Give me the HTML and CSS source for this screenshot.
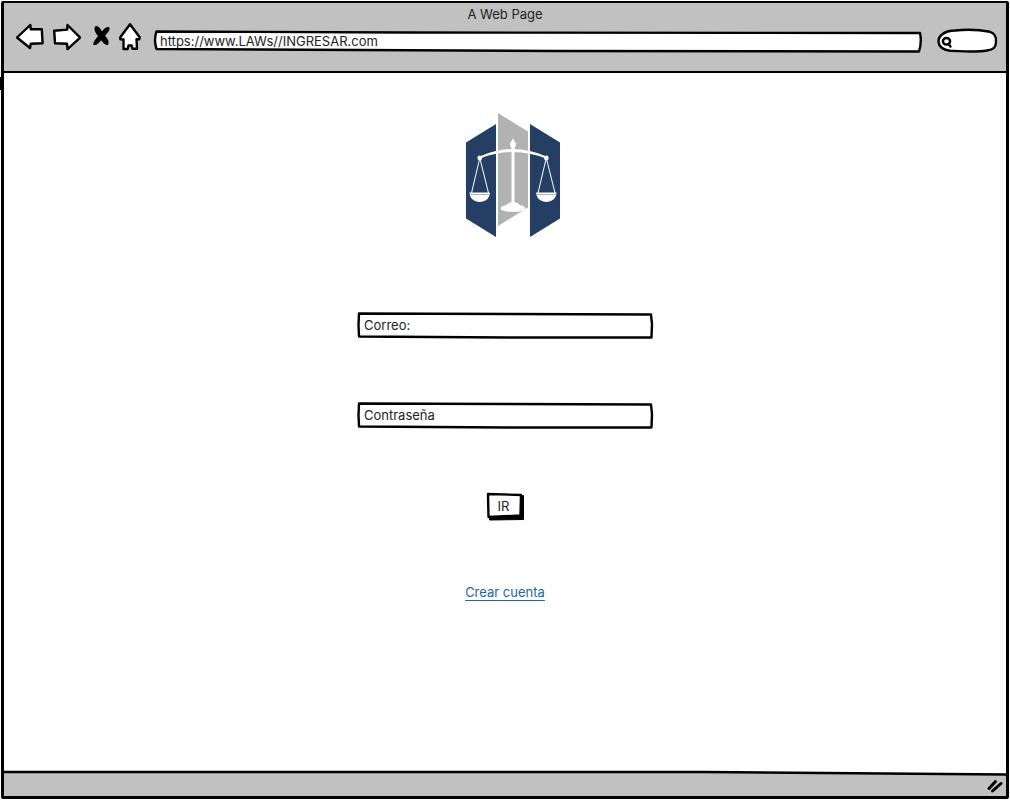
FILE: index.html
```html
<!DOCTYPE html>
<html lang="es">
<head>
<meta charset="utf-8">
<meta name="viewport" content="width=device-width, initial-scale=1">
<title>A Web Page</title>
<link rel="stylesheet" href="styles.css">
</head>
<body>
<div class="window">
  <header class="chrome">
    <div class="title">A Web Page</div>
    <div class="toolbar">
      <button class="tool" type="button" aria-label="Back">
        <svg class="ink" width="28" height="28" viewBox="16 23 28 28"><path d="M17 37.5 30.3 25 30.8 29.3 41.8 29.3 42.6 43.3 30.8 43.8 30 48Z"/></svg>
      </button>
      <button class="tool" type="button" aria-label="Forward">
        <svg class="ink" width="28" height="28" viewBox="53 23 28 28"><path d="M54.2 30.7 67.2 29.6 67.5 25 80.2 37.6 67.5 49.2 67 43.8 55 43.3Z"/></svg>
      </button>
      <button class="tool" type="button" aria-label="Stop">
        <svg width="20" height="28" viewBox="90 23 20 28"><path d="M95.5 26C99 26 100.500 28.500 102 31.500 103.500 29 106 26.300 109 27 111 30 107.500 33 105 35.800 108 39 109.500 42 108 45 105 45.500 103 42.500 101 40.300 99 43 96.500 45.700 93.500 45 92.500 42 96 39 98 36.300 95.500 33 93 28.500 95.500 26Z"/></svg>
      </button>
      <button class="tool" type="button" aria-label="Home">
        <svg class="ink" width="22" height="28" viewBox="119 23 22 28"><path d="M130 24.300 139.700 37.300 139.300 39.200 136.500 39.200 137 48.800 132.500 48.800 131.700 45.500 128.500 45.500 127.700 49 123.500 49 123.500 39.500 120.300 39.200 120.300 37.300Z"/></svg>
      </button>
      <div class="sketch url">
        <svg class="frame" viewBox="0 0 768 22" preserveAspectRatio="none" aria-hidden="true"><path d="M2.500 1.500 250 2.500 766 3Q768 12 765 21.500L400 21 2.500 19Q-.5 10 2.500 1.500Z"/></svg>
        <input class="entry" type="text" aria-label="Address" value="https://www.LAWs//INGRESAR.com">
      </div>
      <div class="sketch search">
        <svg class="frame" viewBox="937 28 61 26" aria-hidden="true"><path d="M938.500 42C938 35 946 30.500 955 30.500 968 29 981 30 990 31.800 994 33 996.500 37 996 42 996 47 994 49.500 987 50.500 974 52.500 961 51 950 50.800 942 49.500 939 46 938.500 42Z"/><ellipse cx="946.500" cy="41.300" rx="3.600" ry="3.300"/><path d="M948.500 44 950.500 46.500"/></svg>
        <input class="entry entry-search" type="search" aria-label="Search">
      </div>
    </div>
  </header>
  <main class="page">
    <svg class="logo" width="112" height="126" viewBox="449 112 112 126" role="img" aria-label="LAWs">
      <path fill="#243f63" d="M466 142.500 496 124V237L466 218.500ZM530 124 560 142.500V218.500L530 237Z"/>
      <path fill="#b2b2b2" d="M498 113 528 131.500V207.500L498 226Z"/>
      <g fill="#fff">
        <path d="M479.500 156.500Q513 141.500 546.500 156.500L546 158.500Q513 145.500 480 158.500Z"/>
        <circle cx="479.800" cy="158" r="2.400"/><circle cx="546.300" cy="158" r="2.400"/>
        <path d="M513 138C514 141 516 142 516 144.500 516 146 515 147 514.500 148H511.500C511 147 510 146 510 144.500 510 142 512 141 513 138Z"/>
        <path d="M511.500 147H514.500V203H511.500Z"/>
        <path d="M500.500 208.500C501 205.500 506 206 508 203.500 511 201.500 515 201.500 518 203.500 520 206 525 205.500 525.500 208.500 525 213 501 213 500.500 208.500Z"/>
        <path d="M469.500 192.500H489.800C490 205 469.500 205 469.500 192.500ZM536.200 192.500H556.500C556.500 205 536.200 205 536.200 192.500Z"/>
      </g>
      <path fill="none" stroke="#fff" d="M471.500 193 479.800 158 488.500 193M538 193 546.300 158 555 193"/>
      <path stroke="#8c9bb8" stroke-width=".8" d="M470 194.600H489.500M536.500 194.600H556"/>
    </svg>
    <form class="login">
      <div class="sketch field">
        <svg class="frame" viewBox="0 0 295 27" preserveAspectRatio="none" aria-hidden="true"><path d="M2 1.500 150 2 293 2.500 294 12 293.500 25.500 150 25.500 2 24.500 1.500 13Z"/></svg>
        <input class="entry" type="email" aria-label="Correo" placeholder="Correo:">
      </div>
      <div class="sketch field">
        <svg class="frame" viewBox="0 0 295 27" preserveAspectRatio="none" aria-hidden="true"><path d="M2 1.500 150 2 293 2.500 294 12 293.500 25.500 150 25.500 2 24.500 1.500 13Z"/></svg>
        <input class="entry" type="password" aria-label="Contraseña" placeholder="Contraseña">
      </div>
      <button class="sketch go" type="button">
        <svg class="frame" viewBox="486 492 38 28" aria-hidden="true"><path class="shade" d="M490 496 523.500 495.500 523.500 519.500 490 520Z"/><path d="M488 494 521 495 520.500 515.500 488.500 517Z"/></svg>
        <span class="go-text">IR</span>
      </button>
      <a class="signup" href="#">Crear cuenta</a>
    </form>
  </main>
  <footer class="status">
    <svg class="edge" viewBox="0 0 1003 6" preserveAspectRatio="none" aria-hidden="true"><path class="blank" d="M0 0H1003V5L700 2H0Z"/><path class="rule" d="M0 2 700 2 1003 4.500"/></svg>
    <svg class="grip" width="18" height="16" viewBox="987 779 18 16" aria-hidden="true"><path d="M990 789.500 996.500 782.500M993.500 792 1002 784.500"/></svg>
  </footer>
</div>
</body>
</html>
```
FILE: styles.css
```css
* {
  box-sizing: border-box;
}

body {
  margin: 0;
  padding: 1px;
  min-height: 100vh;
  display: flex;
  background: #fff;
  color: #222;
  font: 13px/18px Inter, "Noto Sans", sans-serif;
}

.window {
  position: relative;
  flex: 1;
  display: flex;
  flex-direction: column;
  border: 2px solid #000;
  border-right-width: 3px;
  border-left-width: 3px;
  border-bottom-width: 3px;
  border-radius: 2px;
}

/* Thicker pen stroke on the left edge */
.window::before {
  content: "";
  position: absolute;
  top: 74px;
  left: -4px;
  width: 3px;
  height: 13px;
  background: #000;
}

.chrome {
  padding: 2px 0 17px;
  background: #c1c1c1;
  border-bottom: 2px solid #000;
}

.title {
  text-align: center;
}

.toolbar {
  display: flex;
  align-items: flex-start;
  gap: 9px;
  padding: 0 8px 0 12px;
}

.tool {
  display: block;
  padding: 0;
  border: 0;
  background: none;
}

.tool svg,
.logo {
  display: block;
}

.ink path,
.frame {
  fill: #fff;
  stroke: #000;
  stroke-width: 2.4px;
  stroke-linejoin: round;
  stroke-linecap: round;
}

.sketch {
  display: grid;
}

.sketch > * {
  grid-area: 1 / 1;
  min-width: 0;
}

.frame {
  width: 100%;
  height: 100%;
  overflow: visible;
}

.frame .shade {
  fill: #000;
  stroke-width: 1px;
}

.url {
  flex: 1;
  height: 22px;
  margin: 7px 6px 0 4px;
}

.search {
  width: 61px;
  height: 26px;
  margin-top: 5px;
}

.entry {
  width: 100%;
  padding: 0 7px 2px;
  border: 0;
  background: none;
  color: inherit;
  font: inherit;
  outline: 0;
}

.url .entry {
  padding: 0 6px;
}

.entry-search {
  padding: 0 8px 0 18px;
}

.entry::placeholder {
  color: #222;
  opacity: 1;
}

.page {
  flex: 1;
  display: flex;
  flex-direction: column;
  align-items: center;
  gap: 74px;
  padding: 39px 16px;
}

.login {
  display: flex;
  flex-direction: column;
  align-items: center;
  gap: 63px;
  width: 100%;
  max-width: 296px;
}

.field {
  width: 100%;
  height: 27px;
}

.go {
  width: 38px;
  height: 28px;
  padding: 0;
  border: 0;
  background: none;
  color: inherit;
  font: inherit;
}

.go-text {
  align-self: center;
  padding-right: 3px;
}

.signup {
  color: #1b66a5;
  text-underline-offset: 3px;
}

.status {
  display: flex;
  flex-direction: column;
  align-items: flex-end;
  background: #c1c1c1;
}

.edge {
  width: 100%;
  height: 6px;
}

.blank {
  fill: #fff;
}

.rule {
  fill: none;
  stroke: #000;
  stroke-width: 2.4px;
}

.grip {
  margin: 2px 2px 2px 0;
  fill: none;
  stroke: #000;
  stroke-width: 3px;
  stroke-linecap: round;
}
```
